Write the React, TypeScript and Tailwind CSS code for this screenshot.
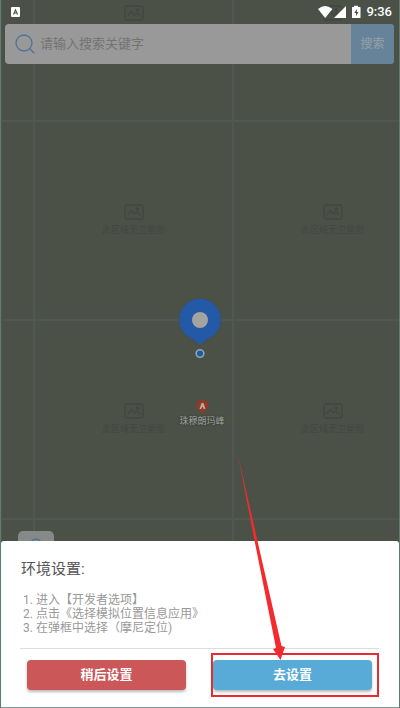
const tileRows = [true, true, true, false];

const steps = [
  "进入【开发者选项】",
  "点击《选择模拟位置信息应用》",
  "在弹框中选择（摩尼定位)",
];

function MapTile({ empty = false }: { empty?: boolean }) {
  return (
    <div className="flex flex-col items-center justify-center border-l-2 border-t-2 border-[#51584f] text-[#42473f]">
      {!empty && (
        <>
          <svg width="20" height="16" viewBox="0 0 20 16" fill="none" stroke="currentColor" strokeWidth="1.3">
            <rect x="1" y="1" width="18" height="14" rx="2" />
            <path d="M3.5 11 L7.5 6.5 L10.5 10 L13 8 L16.5 11.5" />
            <circle cx="13.5" cy="5" r="1" />
          </svg>
          <span className="mt-0.5 text-[9px] leading-4">此区域无卫星图</span>
        </>
      )}
    </div>
  );
}

function MapView() {
  return (
    <div className="absolute inset-0 overflow-hidden bg-[#4c5147]">
      <div className="absolute -left-px -top-[79px] grid auto-rows-[199px] grid-cols-[33px_199px_199px]">
        {tileRows.map((visible, i) => (
          <div key={i} className="contents">
            <MapTile empty />
            <MapTile empty={!visible} />
            <MapTile empty={!visible} />
          </div>
        ))}
      </div>

      {/* Current position */}
      <svg
        className="absolute left-1/2 top-[298px] -translate-x-1/2"
        width="46"
        height="62"
        viewBox="0 0 46 62"
      >
        <path
          d="M23 47 C20 43 15 42 10 38 A21 21 0 1 1 36 38 C31 42 26 43 23 47 Z"
          fill="#2459a8"
          stroke="#3d4b55"
          strokeWidth="0.6"
        />
        <circle cx="23" cy="22" r="8" fill="#a5a39f" />
        <circle cx="23" cy="55.500" r="3.8" fill="#2159a0" stroke="#93a6b4" strokeWidth="1.6" />
      </svg>

      {/* Mount Everest */}
      <div className="absolute left-[201px] top-[399px] flex -translate-x-1/2 flex-col items-center">
        <svg width="14" height="16" viewBox="0 0 14 16">
          <path d="M7 15 L4.5 12 A6 6 0 1 1 9.5 12 Z" fill="#8f3926" />
          <path d="M4 10 L6 4 H8 L10 10 H8.200 L7 7.500 L5.800 10 Z" fill="#b8aaa4" />
        </svg>
        <span className="whitespace-nowrap text-[9px] leading-3 text-[#a3a5a0] [text-shadow:0_0_2px_#222]">
          珠穆朗玛峰
        </span>
      </div>
    </div>
  );
}

function StatusBar() {
  return (
    <div className="flex h-[23px] items-center justify-between pl-2.5 pr-[7px] text-white">
      <svg width="9" height="10" viewBox="0 0 9 10">
        <rect width="9" height="10" rx="1" fill="#fff" />
        <path d="M2.500 7.500 L4.500 2.800 L6.500 7.500 M3.300 6 H5.700" fill="none" stroke="#4c5147" strokeWidth="1.1" />
      </svg>
      <div className="flex items-center">
        <svg width="44" height="14" viewBox="0 0 44 14" fill="#fff">
          <path d="M0 4 Q7.200 -2 14.400 4 L7.200 13 Z" />
          <path d="M28 1 V13 H16 Z" />
          <path d="M36 2 V0.700 H40 V2 H42 Q42.500 2 42.500 2.500 V12.500 Q42.500 13 42 13 H34.500 Q34 13 34 12.500 V2.500 Q34 2 34.500 2 Z" />
          <path d="M38.900 4 L36.300 8 H38 V11.200 L40.500 7 H38.900 Z" fill="#4c5147" />
        </svg>
        <span className="ml-1 text-[13px] font-medium leading-4">9:36</span>
      </div>
    </div>
  );
}

function SearchBar() {
  return (
    <form className="ml-1 mr-[5px] mt-px flex h-10 overflow-hidden rounded-[4px] bg-[#999]">
      <label htmlFor="keyword" className="flex items-center px-2.5 pr-[5px]">
        <svg width="20" height="20" viewBox="0 0 20 20" fill="none" stroke="#4f7395" strokeWidth="1.3">
          <circle cx="9" cy="9" r="8" />
          <path d="M14.700 14.700 L19 19" strokeLinecap="round" />
        </svg>
      </label>
      <input
        id="keyword"
        type="text"
        aria-label="搜索"
        placeholder="请输入搜索关键字"
        className="min-w-0 flex-1 bg-transparent text-[13px] outline-none placeholder:text-[#737373]"
      />
      <button type="button" className="w-[43px] bg-[#66839a] text-xs font-medium text-[#909da7]">
        搜索
      </button>
    </form>
  );
}

function SettingsSheet() {
  return (
    <section className="rounded-t-[3px] border-b border-[#7e9a90] bg-white pb-[17px] pl-[19px] pr-5 pt-[18px]">
      <h2 className="pl-px text-[15px] leading-5 text-[#555]">环境设置:</h2>
      <ol className="mt-[14px] pl-[3px] text-xs leading-[14px] text-[#999]">
        {steps.map((step, i) => (
          <li key={step}>
            {i + 1}. {step}
          </li>
        ))}
      </ol>
      <hr className="mt-[13px] border-[#ddd]" />
      <div className="mt-[11px] flex gap-[27px] px-[7px]">
        <button
          type="button"
          className="h-[30px] flex-1 rounded-[4px] bg-[#cb5759] text-[13px] font-bold text-white shadow-[0_2px_3px_#bbb]"
        >
          稍后设置
        </button>
        <div className="relative flex flex-1">
          <button
            type="button"
            className="h-[30px] flex-1 rounded-[4px] bg-[#58abd6] text-[13px] font-bold text-white shadow-[0_2px_3px_#bbb]"
          >
            去设置
          </button>

          {/* Highlight frame and arrow */}
          <div className="pointer-events-none absolute -bottom-[7px] -left-[2px] -right-[7px] -top-[7px] border-2 border-[#e92a31]" />
          <svg
            className="pointer-events-none absolute bottom-full left-[24px]"
            width="50"
            height="205"
            viewBox="0 0 50 205"
            fill="#f52a2e"
          >
            <path d="M1 0 L18 75 L44.500 191 L48 192 L43.500 205 L36 194 L39 193 L16 78 Z" />
          </svg>
        </div>
      </div>
    </section>
  );
}

export default function App() {
  return (
    <main className="relative flex min-h-screen flex-col overflow-hidden border-x border-[#5c7d70] font-[Roboto,'Noto_Sans_CJK_SC',sans-serif]">
      <MapView />
      <div className="relative flex flex-1 flex-col">
        <StatusBar />
        <SearchBar />
        <div className="flex flex-1 items-end px-4">
          <button
            type="button"
            aria-label="定位"
            className="ml-px flex h-[10px] w-9 justify-center overflow-hidden rounded-t-[5px] bg-[#858988] pt-[7px]"
          >
            <svg width="12" height="12" viewBox="0 0 12 12" className="shrink-0" fill="none" stroke="#4f7395" strokeWidth="1.3">
              <circle cx="6" cy="6" r="5" />
            </svg>
          </button>
        </div>
        <SettingsSheet />
      </div>
    </main>
  );
}
